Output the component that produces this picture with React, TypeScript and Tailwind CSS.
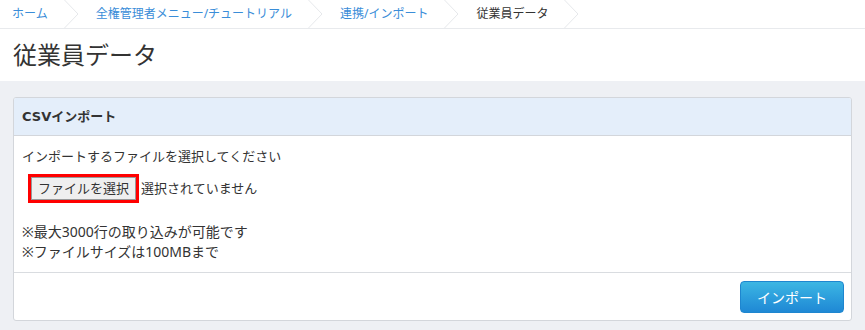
const crumbs = [
  { label: 'ホーム', link: true },
  { label: '全権管理者メニュー/チュートリアル', link: true },
  { label: '連携/インポート', link: true },
  { label: '従業員データ', link: false },
];

function Chevron() {
  return (
    <svg width="15" height="28" viewBox="0 0 15 28" className="ml-4 mr-[17px] shrink-0">
      <path d="M0.5 0 L14 14 L0.5 28" fill="none" stroke="#e6e8eb" strokeWidth="1" />
    </svg>
  );
}

export default function App() {
  return (
    <div
      className="w-[865px] h-[330px] bg-[#eef0f4] text-[#333] overflow-hidden"
      style={{ fontFamily: '"Noto Sans", "Noto Sans CJK JP", sans-serif' }}
    >
      {/* Breadcrumb */}
      <div className="h-[29px] bg-white border-b border-[#e8eaed] flex items-center pl-3">
        {crumbs.map((c) => (
          <div key={c.label} className="flex items-center h-[28px]">
            <span className={`text-[12px] leading-none ${c.link ? 'text-[#3a8dd8]' : 'text-[#333]'}`}>
              {c.label}
            </span>
            <Chevron />
          </div>
        ))}
      </div>

      {/* Title */}
      <div className="h-[52px] bg-white flex items-center px-[13px]">
        <h1 className="text-[24px] leading-none text-[#333]">従業員データ</h1>
      </div>

      {/* Card */}
      <div className="px-[13px] pt-4">
        <div className="bg-white border border-[#d3d6db] rounded-[3px] overflow-hidden">
          <div className="h-[38px] bg-[#e4eefa] border-b border-[#d3d6db] flex items-center pl-2">
            <span
              className="text-[13px] font-bold text-[#333]"
              style={{ fontFamily: '"DejaVu Sans", "Noto Sans CJK JP", sans-serif' }}
            >
              CSVインポート
            </span>
          </div>

          <div className="px-2 pt-[10px] pb-[10px] border-b border-[#d9dce0] text-[13px] text-[#333]">
            <p className="leading-[20px]">インポートするファイルを選択してください</p>
            <div className="flex items-center mt-2 ml-[6px]">
              <div className="border-[3px] border-[#ff0000]">
                <div className="h-[23px] px-[6px] bg-[#efefef] border border-[#999] flex items-center leading-none">
                  ファイルを選択
                </div>
              </div>
              <span className="ml-[2px]">選択されていません</span>
            </div>
            <div className="mt-[19px] leading-[20px] text-[14px]">
              <p>※最大3000行の取り込みが可能です</p>
              <p>※ファイルサイズは100MBまで</p>
            </div>
          </div>

          <div className="flex justify-end pt-2 pb-[7px] pr-[7px]">
            <button className="w-[104px] h-[32px] rounded-[4px] border border-[#1e86cf] bg-gradient-to-b from-[#3cb6e3] to-[#1f88d5] text-white text-[14px]">
              インポート
            </button>
          </div>
        </div>
      </div>
    </div>
  );
}
